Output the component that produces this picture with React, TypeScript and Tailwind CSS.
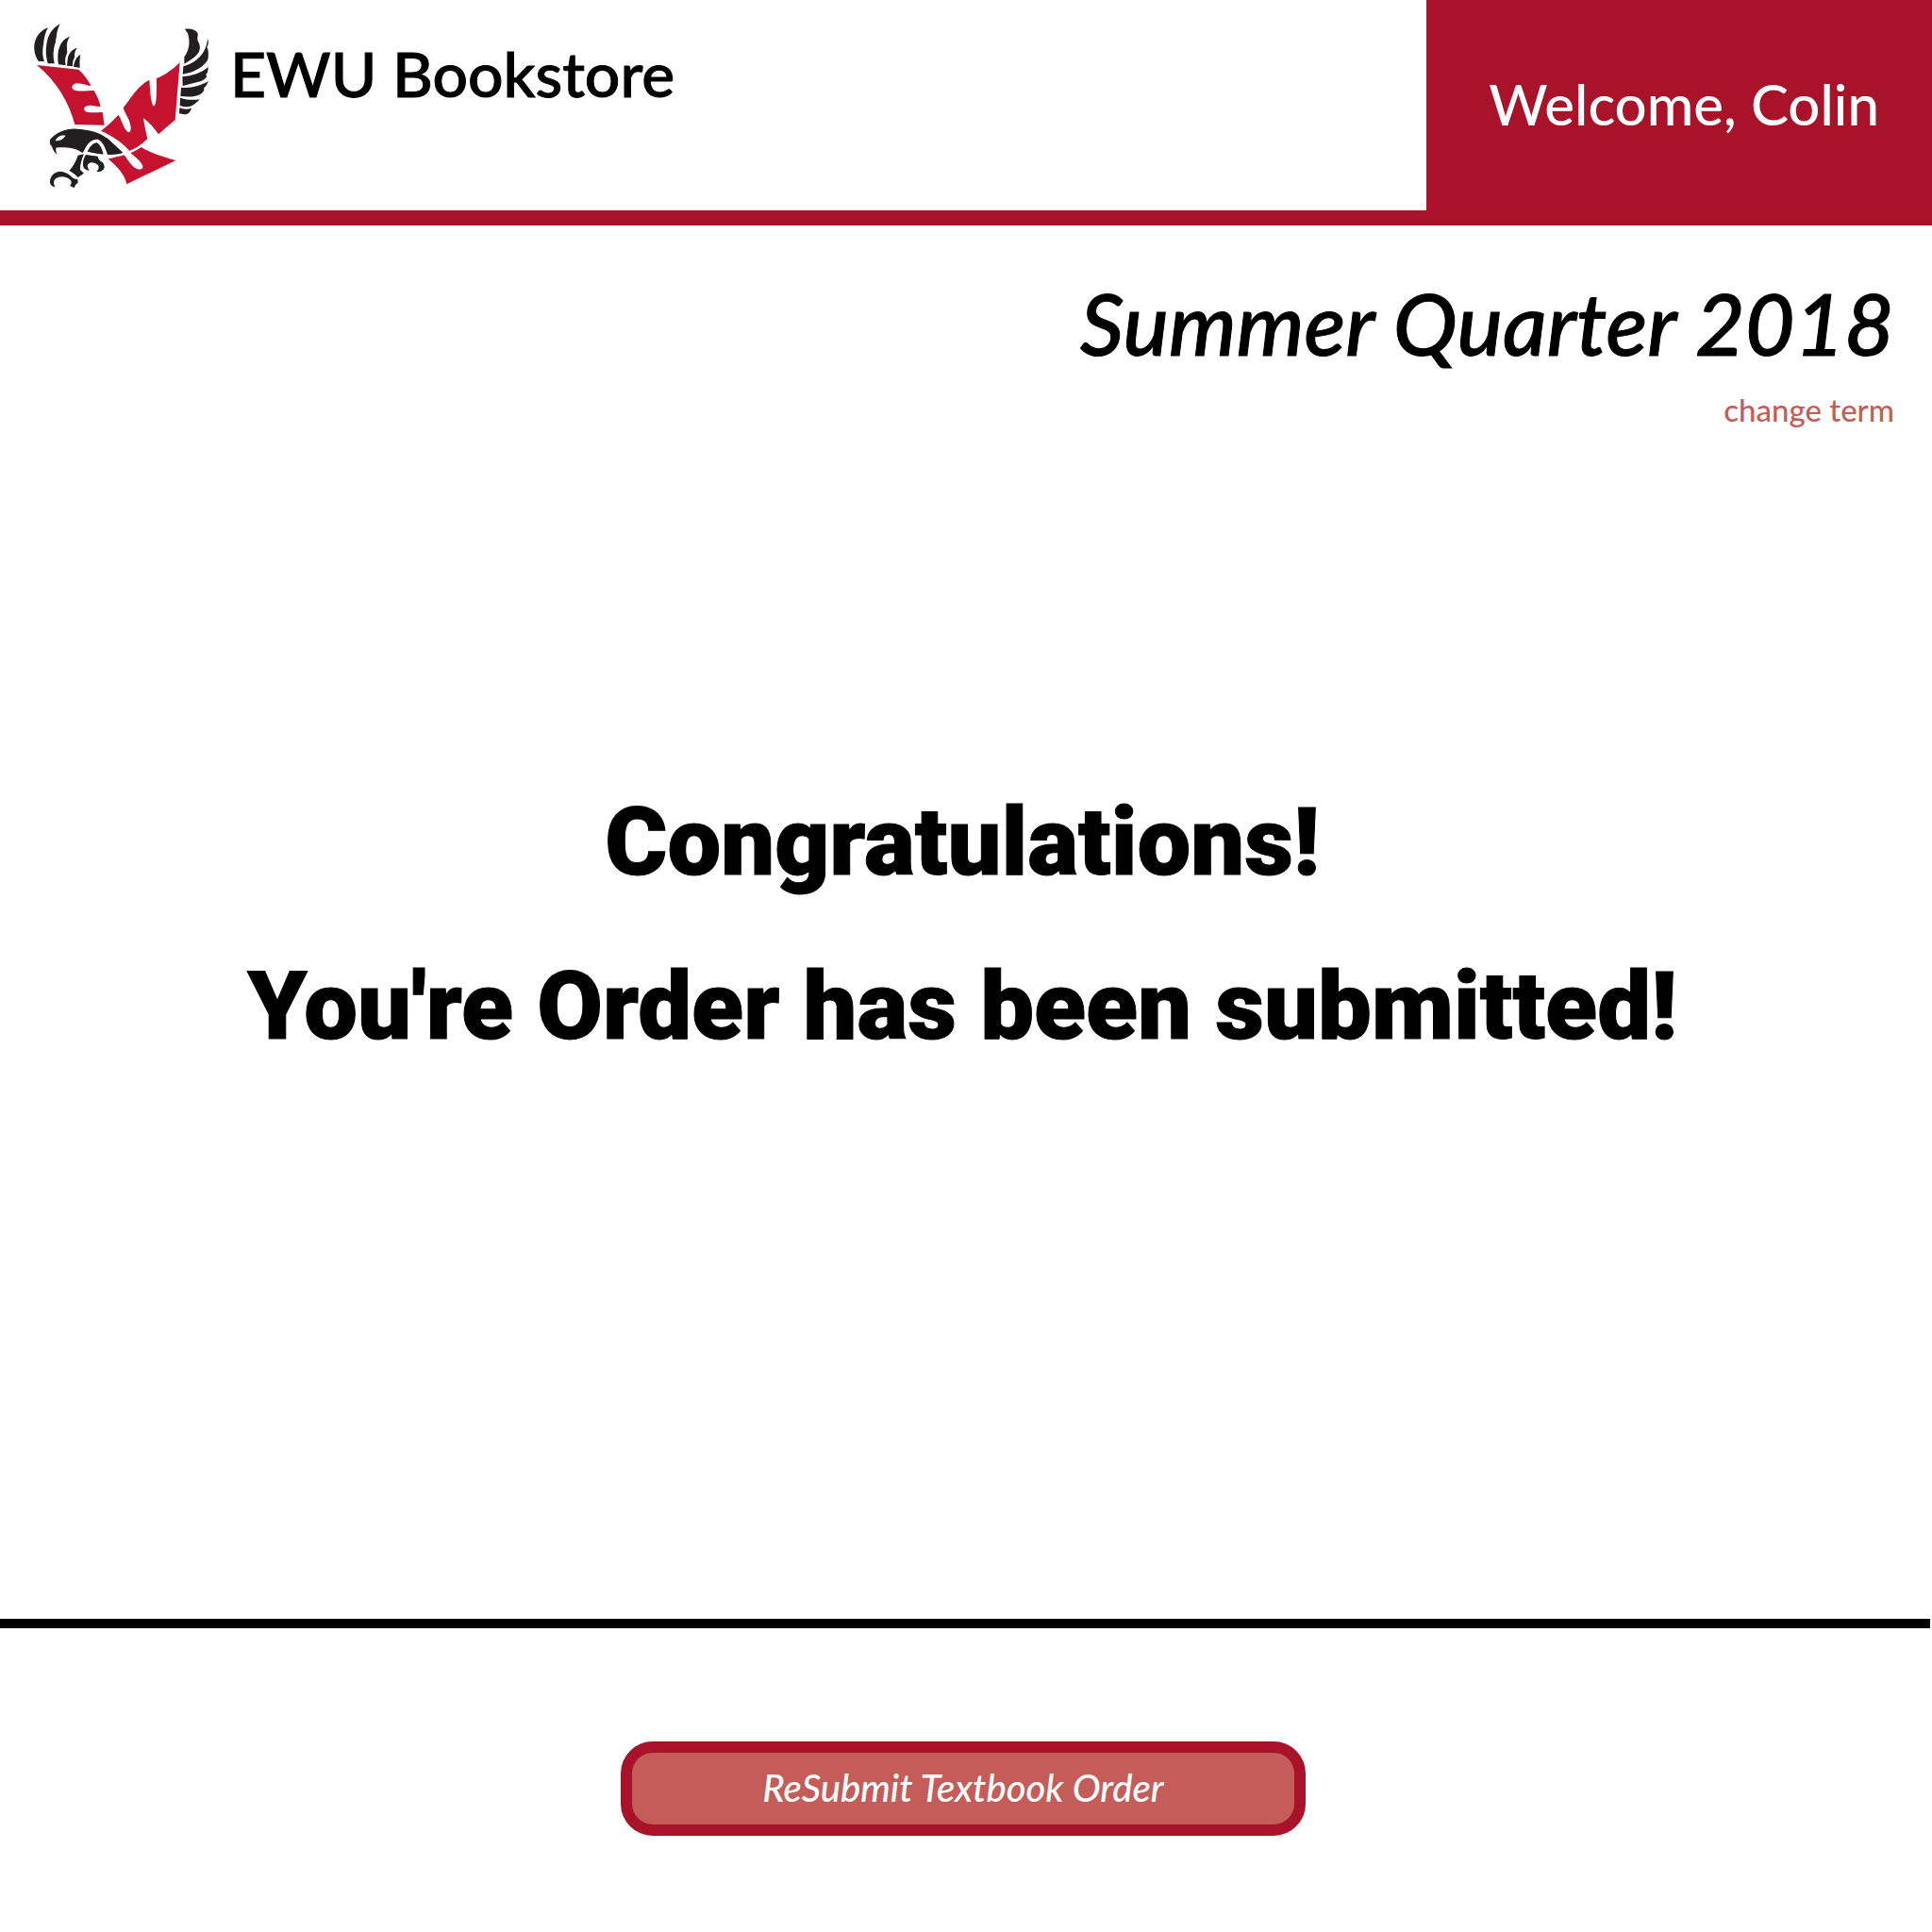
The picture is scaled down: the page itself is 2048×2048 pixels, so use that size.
function EagleLogo() {
  return (
    <svg viewBox="0 0 660 630" className="h-[210px] w-[220px] shrink-0" role="img" aria-label="EWU Eagles logo">
      <g fill="#231f20">
        {/* left wing feathers */}
        <path d="M93 58C62 68 46 98 49 128C51 144 56 156 63 165L81 165C74 148 75 128 78 112C80 91 84 72 93 58Z" />
        <path d="M131 46C105 60 92 82 88 112C84 135 87 155 92 172L113 172C108 150 109 132 114 112C119 104 115 98 119 90C120 72 125 58 131 46Z" />
        <path d="M162 86C143 92 129 110 125 136C123 152 124 164 126 175L149 178C146 164 147 154 152 142C156 136 152 132 153 124C151 110 155 96 162 86Z" />
        <path d="M185 122C168 127 158 140 155 158L153 179L171 181C170 170 173 160 177 152C176 140 179 130 185 122Z" />
        <path d="M196 144C184 150 176 164 174 182L194 186C193 170 193 156 196 144Z" />
        {/* right wing feathers */}
        <path d="M528 63C546 59 562 66 569 76C570 86 566 92 569 100C579 116 577 132 568 142C558 154 542 164 526 173L526 151C543 130 545 100 537 76Z" />
        <path d="M600 92C604 104 603 112 598 120C605 132 602 146 602 157C594 176 572 192 546 200L521 206L523 181C554 172 584 152 594 120C598 112 599 102 600 92Z" />
        <path d="M602 183C602 194 601 202 594 208C602 212 594 222 580 228L521 243L520 214C552 211 580 202 602 183Z" />
        <path d="M603 228C597 240 594 246 588 250C592 256 586 264 577 270C556 280 536 278 514 276L516 248C546 252 578 242 603 228Z" />
        <path d="M575 286C568 294 560 300 554 304C542 312 528 311 512 306L513 281C534 288 554 289 575 286Z" />
        <path d="M549 314C546 324 540 334 527 334L510 331L511 313C524 318 536 318 549 314Z" />
        {/* head */}
        <path d="M99 414C121 390 150 378 184 380C222 382 258 390 284 412L331 455C316 464 302 467 284 466C276 444 268 420 252 413C226 411 212 436 204 456L196 452C174 438 140 438 118 440C117 448 119 454 121 461C110 452 108 442 104 434C98 430 98 422 99 414Z" />
        <path d="M218 452C226 436 236 424 248 424C260 430 266 448 270 465C254 460 238 457 218 452Z" />
        {/* legs and talons */}
        <path d="M188 464L207 460C200 476 194 498 195 510L207 521L188 534L176 523L160 512C174 500 182 480 188 464Z" />
        <path d="M213 462L251 467C252 476 258 482 266 486C272 494 274 502 270 508C264 516 256 517 247 516C254 510 256 502 252 496C244 488 230 484 222 490C216 496 218 504 224 512C210 512 202 502 204 490C204 478 208 470 213 462Z" />
        <path d="M99 545C101 528 114 516 132 515C150 517 164 526 174 538L187 541L188 551C182 554 178 560 176 567C170 565 165 562 163 560C170 552 168 544 158 538C146 530 128 530 117 538C109 546 110 556 116 565C104 563 98 556 99 545Z" />
      </g>
      <path d="M116 418C121 405 134 399 148 401C143 412 130 419 116 418Z" fill="#fff" />
      <g fill="#c4122f">
        <path d="M57 177L190 191C206 206 222 226 230 244C214 242 196 232 178 236C166 240 167 254 178 257C198 262 220 258 239 258C248 274 256 292 260 309C246 310 230 302 216 307C204 312 205 322 216 326C232 330 252 327 266 327L272 368L178 366C160 298 122 230 57 177Z" />
        <path d="M512 169C507 228 502 290 497 351C480 366 461 381 444 397C432 380 414 358 396 346C399 368 404 390 409 412L357 456C332 424 298 402 261 386C280 372 298 354 317 335C327 352 334 384 350 391C360 388 356 368 350 352C343 338 336 326 332 313C355 284 379 241 415 224C417 250 418 284 426 305C432 312 436 298 437 280C439 262 438 240 438 219C464 210 490 190 512 169Z" />
        <path d="M284 475C302 472 318 466 334 461C346 476 358 500 376 507C388 512 396 506 394 498C388 482 368 468 356 457L389 438C423 458 460 470 499 480C452 504 394 530 343 556C338 526 312 500 284 475Z" />
      </g>
      <path d="M204 456C236 458 286 474 330 461C358 452 376 444 389 433" fill="none" stroke="#fff" strokeWidth="7" />
    </svg>
  );
}

export default function App() {
  return (
    <div className="flex min-h-screen flex-col bg-white font-[Lato,sans-serif] font-medium text-black [font-variant-ligatures:none]">
      <header className="flex items-stretch border-b-16 border-[#a8132a]">
        <div className="flex grow items-start gap-1 pl-5">
          <div className="pt-[10px] pb-[3px]">
            <EagleLogo />
          </div>
          <h1 className="pt-[38px] text-[66px] leading-[80px] [-webkit-text-stroke:1px_currentColor]">EWU Bookstore</h1>
        </div>
        <div className="flex items-center bg-[#a8132a] pr-[56px] pb-1 pl-[66px] text-[60px] leading-[72px] text-white">
          Welcome, Colin
        </div>
      </header>

      <main className="flex grow flex-col">
        <section className="flex flex-col items-end pt-[47px] pr-10">
          <h2 className="text-[91px] leading-[112px] italic [-webkit-text-stroke:1px_currentColor]">
            Summer Quarter 2018
          </h2>
          <a href="#change-term" className="mt-4 text-[33px] leading-[40px] text-[#c45c5a]">
            change term
          </a>
        </section>
        <section className="flex grow flex-col items-center justify-center pr-2 pb-[210px] text-center font-[Roboto,sans-serif] text-[101px] leading-[174px] font-black [-webkit-text-stroke:1px_currentColor]">
          <p>Congratulations!</p>
          <p>You're Order has been submitted!</p>
        </section>
      </main>

      <footer className="mr-[2px] flex justify-center border-t-10 border-black pt-[120px] pr-1 pb-[102px]">
        <button
          type="button"
          className="h-[100px] w-[726px] rounded-[34px] border-12 border-[#a8132a] bg-[#c45c5a] pb-[2px] text-[40px] leading-[48px] text-white italic"
        >
          ReSubmit Textbook Order
        </button>
      </footer>
    </div>
  );
}
